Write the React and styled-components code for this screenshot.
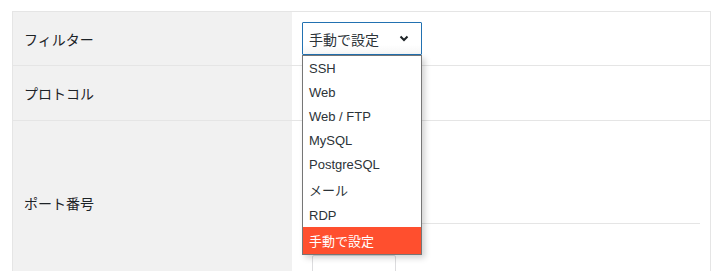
import React from "react";
import styled, { createGlobalStyle } from "styled-components";

const Global = createGlobalStyle`
  html, body { margin: 0; padding: 0; background: #fff; }
  body { font-family: "Liberation Sans", "Noto Sans CJK JP", sans-serif; color: #1d2327; }
`;

const Page = styled.div`
  padding: 11px 0 0 12px;
`;

const Table = styled.table`
  width: 699px;
  table-layout: fixed;
  border-collapse: collapse;
  border: 1px solid #e5e5e5;
`;

const Row = styled.tr`
  border-bottom: 1px solid #e5e5e5;
`;

const Label = styled.th`
  width: 258px;
  background: #f1f1f1;
  text-align: left;
  font-weight: 400;
  font-size: 14px;
  color: #1d2327;
  padding: 0 10px 0 11px;
  vertical-align: middle;
`;

const Cell = styled.td`
  background: #fff;
  padding: 10px;
  vertical-align: top;
  height: ${(p) => p.$h || "auto"};
  box-sizing: border-box;
`;

const SelectWrap = styled.div`
  position: relative;
  width: 120px;
`;

const SelectBox = styled.div`
  box-sizing: border-box;
  height: 33px;
  width: 120px;
  border: 1px solid #2271b1;
  border-radius: 1px;
  display: flex;
  align-items: center;
  justify-content: space-between;
  padding: 0 12px 0 6px;
  font-size: 14px;
  color: #2c3338;
  background: linear-gradient(#fff 70%, #f6f6f6);
`;

const Chevron = () => (
  <svg width="10" height="7" viewBox="0 0 10 7">
    <polyline points="1.5,1.5 5,5 8.5,1.5" fill="none" stroke="#1d2327" strokeWidth="2" />
  </svg>
);

const Menu = styled.ul`
  position: absolute;
  top: 33px;
  left: 0;
  width: 120px;
  box-sizing: border-box;
  margin: 0;
  padding: 0;
  list-style: none;
  background: #fff;
  border: 1px solid #767676;
  box-shadow: 3px 3px 6px rgba(0, 0, 0, 0.18);
  z-index: 10;
`;

const Item = styled.li`
  height: ${(p) => (p.$cjk ? "27px" : "24px")};
  display: flex;
  align-items: center;
  padding: 0 6px;
  font-size: 13px;
  color: ${(p) => (p.$active ? "#fff" : "#2c3338")};
  background: ${(p) => (p.$active ? "#ff4f2e" : "#fff")};
`;

const Upper = styled.div`
  height: 92px;
  border-bottom: 1px solid #e5e5e5;
`;

const Field = styled.div`
  margin: 31px 0 0 10px;
  width: 84px;
  height: 20px;
  box-sizing: border-box;
  border: 1px solid #dcdcde;
  border-radius: 2px;
`;

const options = [
  { t: "SSH" },
  { t: "Web" },
  { t: "Web / FTP" },
  { t: "MySQL" },
  { t: "PostgreSQL" },
  { t: "メール", cjk: true },
  { t: "RDP" },
  { t: "手動で設定", cjk: true, active: true },
];

export default function App() {
  return (
    <>
      <Global />
      <Page>
        <Table>
          <tbody>
            <Row>
              <Label>フィルター</Label>
              <Cell>
                <SelectWrap>
                  <SelectBox>
                    <span>手動で設定</span>
                    <Chevron />
                  </SelectBox>
                  <Menu>
                    {options.map((o) => (
                      <Item key={o.t} $cjk={o.cjk} $active={o.active}>
                        {o.t}
                      </Item>
                    ))}
                  </Menu>
                </SelectWrap>
              </Cell>
            </Row>
            <Row>
              <Label>プロトコル</Label>
              <Cell $h="55px" />
            </Row>
            <Row>
              <Label>ポート番号</Label>
              <Cell>
                <Upper />
                <Field />
              </Cell>
            </Row>
          </tbody>
        </Table>
      </Page>
    </>
  );
}
